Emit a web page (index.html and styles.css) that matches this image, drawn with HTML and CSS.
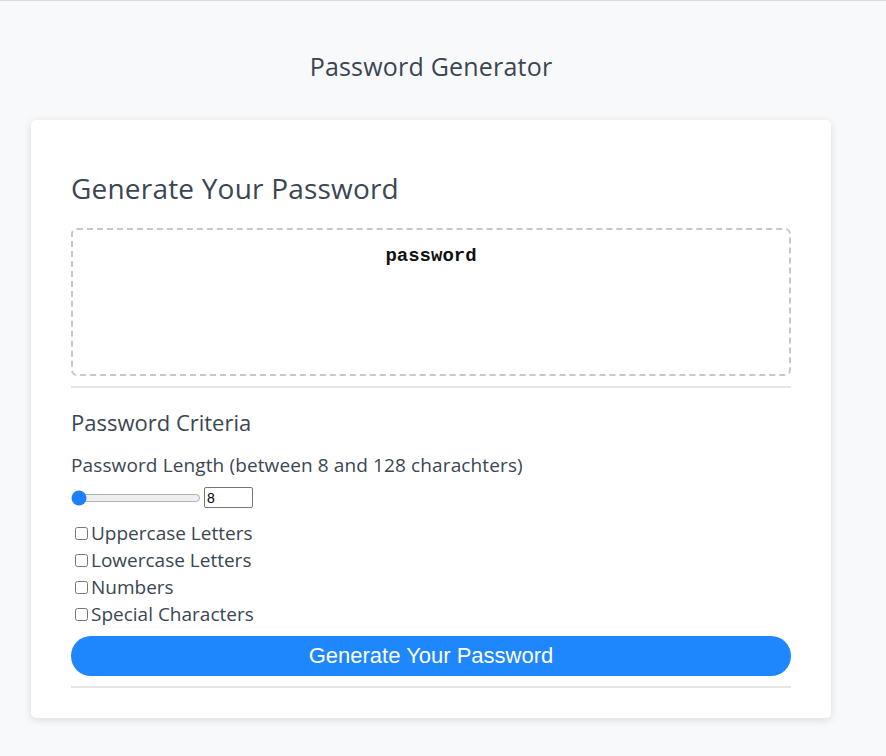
FILE: index.html
```html
<!DOCTYPE html>
<html lang="en">
<head>
<meta charset="utf-8">
<title>Password Generator</title>
<link rel="stylesheet" href="styles.css">
</head>
<body>
<div class="page">
  <header class="top">
    <h1 class="title">Password Generator</h1>
  </header>
  <main class="card">
    <h2 class="card-title">Generate Your Password</h2>
    <textarea class="output" placeholder="password" readonly></textarea>
    <hr class="rule">
    <h3 class="criteria-title">Password Criteria</h3>
    <p class="length-label">Password Length (between 8 and 128 charachters)</p>
    <div class="length-row">
      <input class="range" type="range" min="8" max="128" value="8">
      <input class="number" type="number" min="8" max="128" value="8">
    </div>
    <ul class="options">
      <li><label><input type="checkbox">Uppercase Letters</label></li>
      <li><label><input type="checkbox">Lowercase Letters</label></li>
      <li><label><input type="checkbox">Numbers</label></li>
      <li><label><input type="checkbox">Special Characters</label></li>
    </ul>
    <button class="generate" type="button">Generate Your Password</button>
    <hr class="rule rule-bottom">
  </main>
</div>
</body>
</html>
```
FILE: styles.css
```css
html, body {
  margin: 0;
  padding: 0;
}
body {
  background: #f8f9fb;
  border-top: 1px solid #d9dbde;
  font-family: "Open Sans", "DejaVu Sans", sans-serif;
  color: #3b4653;
  min-height: 755px;
}
.page {
  width: 862px;
}
.top {
  padding-top: 49px;
  height: 70px;
}
.title {
  margin: 0;
  text-align: center;
  font-weight: 400;
  font-size: 25px;
  letter-spacing: 0.2px;
  line-height: 32px;
}
.card {
  width: 720px;
  margin: 0 auto;
  background: #fff;
  border-radius: 5px;
  box-shadow: 0 2px 8px rgba(0,0,0,0.12);
  padding: 40px 40px 30px;
}
.card-title {
  margin: 0;
  font-weight: 400;
  font-size: 28px;
  letter-spacing: 0.2px;
  line-height: 36px;
  padding-top: 10px;
}
.output {
  display: block;
  box-sizing: border-box;
  width: 720px;
  height: 148px;
  margin-top: 22px;
  border: 2px dashed #c3c7ce;
  border-radius: 6px;
  resize: none;
  text-align: center;
  font-family: "Liberation Mono", monospace;
  font-size: 19px;
  font-weight: 700;
  padding: 15px 16px 16px;
  outline: none;
}
.output::placeholder {
  color: #111;
}
.rule {
  border: 0;
  height: 2px;
  background: #e6e6e6;
  margin: 10px 0 0;
}
.criteria-title {
  margin: 20px 0 0;
  font-weight: 400;
  font-size: 22px;
  line-height: 28px;
}
.length-label {
  margin: 16px 0 0;
  font-size: 19px;
  letter-spacing: 0.12px;
  line-height: 26px;
}
.length-row {
  display: flex;
  align-items: center;
  gap: 3px;
  margin-top: 9px;
  height: 21px;
}
.range {
  width: 130px;
  margin: 0;
  accent-color: #1e80ff;
}
.number {
  width: 49px;
  height: 21px;
  box-sizing: border-box;
  margin: 0;
  font-family: "Liberation Sans", Arial, sans-serif;
  font-size: 14px;
  padding: 1px 2px;
  border: 1px solid #767676;
  border-radius: 2px;
}
.options {
  list-style: none;
  margin: 12px 0 0;
  padding: 0;
}
.options li {
  height: 27px;
  line-height: 27px;
  font-size: 19px;
}
.options label {
  display: flex;
  align-items: center;
}
.options input {
  width: 13px;
  height: 13px;
  margin: 0 3px 0 4px;
}
.generate {
  display: block;
  width: 720px;
  height: 40px;
  margin-top: 8px;
  border: 0;
  border-radius: 20px;
  background: #1e87fe;
  color: #fff;
  font-family: "Liberation Sans", Arial, sans-serif;
  font-size: 22px;
}
.rule-bottom {
  margin-top: 10px;
}
```
